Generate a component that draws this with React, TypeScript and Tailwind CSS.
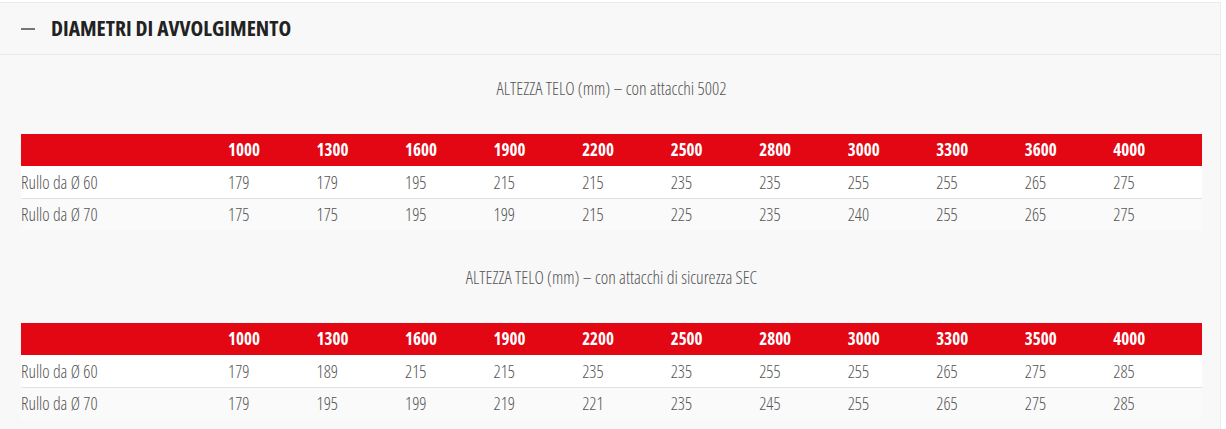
const heights1 = ["1000", "1300", "1600", "1900", "2200", "2500", "2800", "3000", "3300", "3600", "4000"];
const rows1 = [
  { label: "Rullo da Ø 60", values: ["179", "179", "195", "215", "215", "235", "235", "255", "255", "265", "275"] },
  { label: "Rullo da Ø 70", values: ["175", "175", "195", "199", "215", "225", "235", "240", "255", "265", "275"] },
];

const heights2 = ["1000", "1300", "1600", "1900", "2200", "2500", "2800", "3000", "3300", "3500", "4000"];
const rows2 = [
  { label: "Rullo da Ø 60", values: ["179", "189", "215", "215", "235", "235", "255", "255", "265", "275", "285"] },
  { label: "Rullo da Ø 70", values: ["179", "195", "199", "219", "221", "235", "245", "255", "265", "275", "285"] },
];

type Row = { label: string; values: string[] };

function SizeTable({ caption, heights, rows }: { caption: string; heights: string[]; rows: Row[] }) {
  return (
    <div>
      <p className="text-center text-[17.8px] font-light text-[#555] leading-[20px] font-stretch-75%">{caption}</p>
      <table className="mt-[36px] w-full table-fixed border-collapse">
        <colgroup>
          <col className="w-[207px]" />
          {heights.map((h, i) => (
            <col key={i} />
          ))}
        </colgroup>
        <thead>
          <tr className="h-[32px] bg-[#e30613]">
            <th />
            {heights.map((h, i) => (
              <th key={i} className="text-left text-[17px] font-bold text-white font-stretch-75%">
                {h}
              </th>
            ))}
          </tr>
        </thead>
        <tbody>
          {rows.map((r, i) => (
            <tr
              key={r.label}
              className={`h-[32px] ${i === 0 ? "bg-white border-b border-[#e2e2e2]" : "bg-[#fafafa]"}`}
            >
              <td className="text-[17.5px] font-light text-[#555] font-stretch-75%">{r.label}</td>
              {r.values.map((v, j) => (
                <td key={j} className="text-[17.5px] font-light text-[#555] font-stretch-75%">
                  {v}
                </td>
              ))}
            </tr>
          ))}
        </tbody>
      </table>
    </div>
  );
}

export default function App() {
  return (
    <div className="min-h-screen bg-white" style={{ fontFamily: '"Open Sans", sans-serif' }}>
      <div className="mr-[5px] mt-[2px] min-h-[427px] border-t border-r border-[#ececec] bg-[#f8f8f8]">
        {/* Accordion header */}
        <div className="flex h-[52px] items-center border-b border-[#e8e8e8] pl-[21px]">
          <span className="block h-[2px] w-[14px] bg-[#777]" />
          <h2 className="ml-[16px] text-[21.5px] font-bold uppercase text-[#222] font-stretch-75%">
            Diametri di avvolgimento
          </h2>
        </div>

        {/* Panel body */}
        <div className="pl-[21px] pr-[18px] pt-[23px]">
          <SizeTable caption="ALTEZZA TELO (mm) – con attacchi 5002" heights={heights1} rows={rows1} />
          <div className="mt-[37px]">
            <SizeTable caption="ALTEZZA TELO (mm) – con attacchi di sicurezza SEC" heights={heights2} rows={rows2} />
          </div>
        </div>
      </div>
    </div>
  );
}
